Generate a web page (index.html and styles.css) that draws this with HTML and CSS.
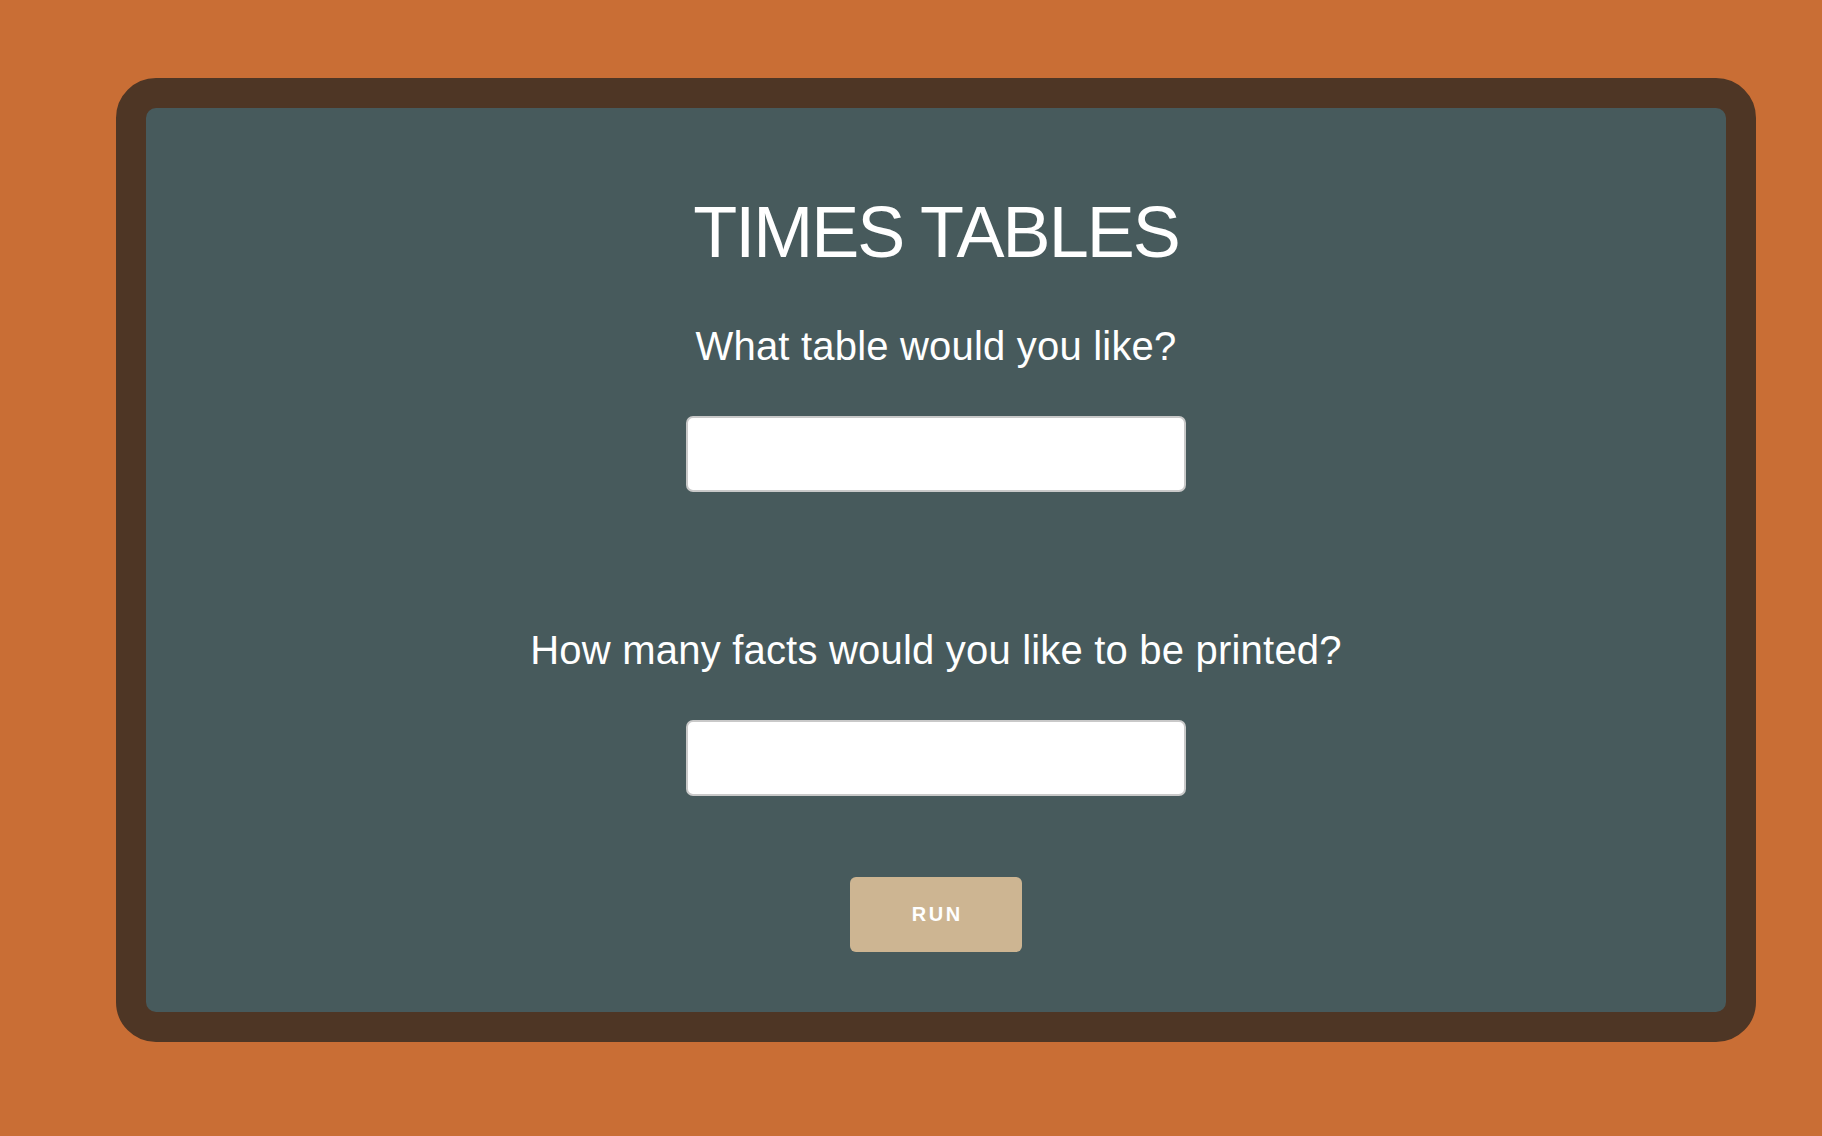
FILE: index.html
```html
<!DOCTYPE html>
<html lang="en">
<head>
<meta charset="utf-8">
<title>Times Tables</title>
<link rel="stylesheet" href="styles.css">
</head>
<body>
<div class="frame">
  <main class="board">
    <h1 class="title">TIMES TABLES</h1>
    <h2 class="question q-first">What table would you like?</h2>
    <input class="field field-first" type="text" aria-label="Table">
    <h2 class="question q-second">How many facts would you like to be printed?</h2>
    <input class="field field-second" type="text" aria-label="Number of facts">
    <button class="run" type="button">RUN</button>
  </main>
</div>
</body>
</html>
```

FILE: styles.css
```css
html, body {
  margin: 0;
  padding: 0;
}

body {
  background: #c96e35;
  font-family: "Liberation Sans", Arial, Helvetica, sans-serif;
  min-height: 1136px;
}

.frame {
  box-sizing: border-box;
  width: 1640px;
  height: 964px;
  margin: 78px 0 0 116px;
  border: 30px solid #4e3625;
  border-radius: 40px;
  background: #475a5c;
  overflow: hidden;
}

.board {
  display: flex;
  flex-direction: column;
  align-items: center;
  padding-top: 88px;
}

.title {
  margin: 0;
  font-size: 72px;
  line-height: 72px;
  font-weight: normal;
  letter-spacing: -2px;
  color: #ffffff;
}

.question {
  margin: 0;
  font-size: 40px;
  line-height: 40px;
  font-weight: normal;
  letter-spacing: 0.2px;
  color: #ffffff;
}

.q-first {
  margin-top: 58px;
}

.q-second {
  margin-top: 138px;
}

.field {
  box-sizing: border-box;
  width: 500px;
  height: 76px;
  margin: 0;
  border: 2px solid #c9c9c9;
  border-radius: 7px;
  background: #ffffff;
  outline: none;
  font-family: inherit;
  font-size: 24px;
}

.field-first {
  margin-top: 50px;
}

.field-second {
  margin-top: 50px;
}

.run {
  box-sizing: border-box;
  width: 172px;
  height: 75px;
  margin-top: 81px;
  border: none;
  border-radius: 6px;
  background: #cdb592;
  color: #ffffff;
  font-family: "Liberation Sans", Arial, Helvetica, sans-serif;
  font-size: 20px;
  font-weight: bold;
  letter-spacing: 2.5px;
  text-indent: 2.5px;
  cursor: pointer;
}
```
